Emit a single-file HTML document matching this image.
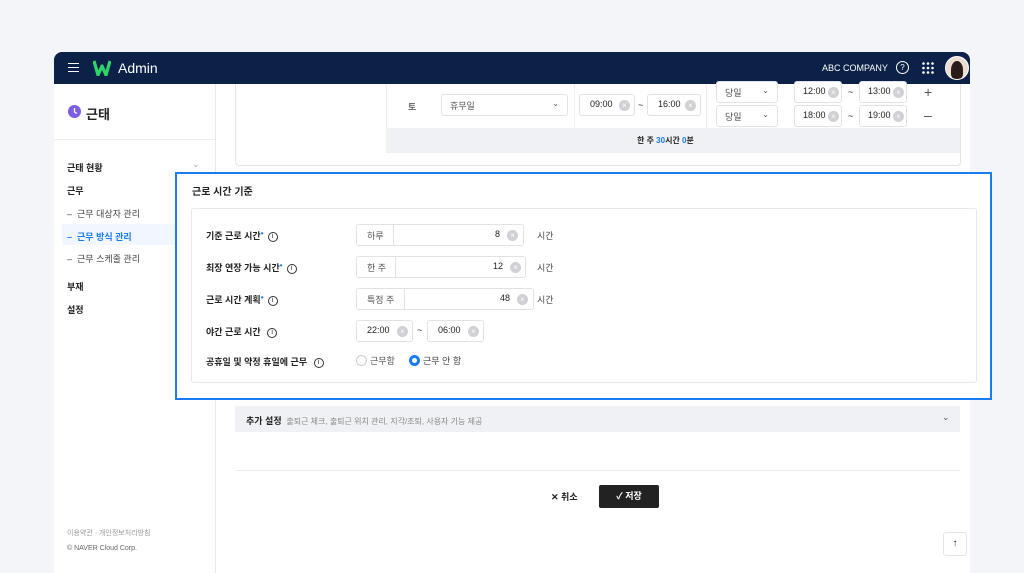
<!DOCTYPE html>
<html><head><meta charset="utf-8"><style>
*{box-sizing:border-box;margin:0;padding:0}
body{width:1024px;height:573px;background:#f4f5f8;font-family:"Liberation Sans","Noto Sans CJK KR",sans-serif;position:relative;overflow:hidden;color:#222}
.abs{position:absolute}
.win{left:54px;top:52px;width:916px;height:521px;background:#fff;border-radius:8px 8px 0 0;overflow:hidden}
.hdr{left:0;top:0;width:916px;height:32px;background:#0b2148}
.side{left:0;top:32px;width:162px;height:489px;border-right:1px solid #e8e8e8;background:#fff}
.t{position:absolute;white-space:nowrap;font-size:9px}
.b{font-weight:bold}
.inp{position:absolute;border:1px solid #e2e2e2;border-radius:3px;background:#fff;height:22px}
.inp .t{top:4px}
.x{position:absolute;width:11px;height:11px;border-radius:50%;background:#cfd1d5;color:#fff;font-size:8px;line-height:11px;text-align:center}
.dd{position:absolute;right:8px;top:4px;font-size:8px;color:#555}
.i{display:inline-block;width:10px;height:10px;border:1px solid #333;border-radius:50%;font-size:7px;line-height:8px;text-align:center;vertical-align:middle;margin-left:4px;font-weight:normal}
.star{color:#1a7cf0;font-size:8px;vertical-align:top}
</style></head><body>
<div class="abs win">
 <div class="abs hdr">
  <div class="abs" style="left:14px;top:11px;width:11px;height:9px;border-top:1.5px solid #fff;border-bottom:1.5px solid #fff"><div style="margin-top:2.5px;border-top:1.5px solid #fff"></div></div>
  <svg class="abs" style="left:39px;top:8px" width="18" height="16" viewBox="0 0 18 16"><path d="M1 1 L5 15 L9 6 L13 15 L17 1" fill="none" stroke="#2fd46a" stroke-width="3.2" stroke-linejoin="round"/></svg>
  <div class="t" style="left:64px;top:8px;font-size:14px;color:#fff">Admin</div>
  <div class="t" style="left:768px;top:11px;font-size:9px;color:#fff">ABC COMPANY</div>
  <div class="abs" style="left:842px;top:9px;width:13px;height:13px;border:1.3px solid #fff;border-radius:50%;color:#fff;font-size:8px;text-align:center;line-height:11px">?</div>
  <svg class="abs" style="left:868px;top:10px" width="12" height="12"><g fill="#fff"><circle cx="1.5" cy="1.5" r="1.3"/><circle cx="6" cy="1.5" r="1.3"/><circle cx="10.5" cy="1.5" r="1.3"/><circle cx="1.5" cy="6" r="1.3"/><circle cx="6" cy="6" r="1.3"/><circle cx="10.5" cy="6" r="1.3"/><circle cx="1.5" cy="10.5" r="1.3"/><circle cx="6" cy="10.5" r="1.3"/><circle cx="10.5" cy="10.5" r="1.3"/></g></svg>
  <div class="abs" style="left:891px;top:4px;width:24px;height:24px;border-radius:50%;background:#e9ddd4;border:1px solid #fff;overflow:hidden"><div style="margin:4px auto 0;width:12px;height:18px;border-radius:50% 50% 30% 30%;background:#2a1c16"></div></div>
 </div>
 <div class="abs side">
  <svg class="abs" style="left:14px;top:21px" width="13" height="13"><circle cx="6.5" cy="6.5" r="6.5" fill="#7b5de8"/><path d="M6.5 3 V7 L9 8.5" stroke="#fff" stroke-width="1.3" fill="none"/></svg>
  <div class="t b" style="left:32px;top:20px;font-size:13px">근태</div>
  <div class="abs" style="left:0;top:55px;width:161px;border-top:1px solid #eee"></div>
  <div class="t b" style="left:13px;top:77px">근태 현황</div>
  <div class="t" style="left:138px;top:75px;color:#aaa">⌄</div>
  <div class="t b" style="left:13px;top:100px">근무</div>
  <div class="t" style="left:13px;top:123px;color:#444">–&nbsp; 근무 대상자 관리</div>
  <div class="abs" style="left:8px;top:140px;width:154px;height:21px;background:#f2f7ff"></div>
  <div class="t b" style="left:13px;top:146px;color:#1a7cf0">–&nbsp; 근무 방식 관리</div>
  <div class="t" style="left:13px;top:168px;color:#444">–&nbsp; 근무 스케줄 관리</div>
  <div class="t b" style="left:13px;top:196px">부재</div>
  <div class="t b" style="left:13px;top:219px">설정</div>
  <div class="t" style="left:13px;top:444px;font-size:7px;color:#999">이용약관 · 개인정보처리방침</div>
  <div class="t" style="left:13px;top:461px;font-size:7px;color:#666">© NAVER Cloud Corp.</div>
 </div>
 <div class="abs" style="left:181px;top:32px;width:726px;height:82px;border:1px solid #e5e5e5;border-top:none;border-radius:0 0 4px 4px"></div>
 <div class="abs" style="left:332px;top:32px;width:574px;height:44px;border-left:1px solid #eee"></div>
 <div class="t" style="left:354px;top:48px">토</div>
 <div class="inp" style="left:387px;top:42px;width:127px"><span class="t" style="left:8px;color:#555">휴무일</span><span class="dd">⌄</span></div>
 <div class="abs" style="left:520px;top:32px;height:44px;border-left:1px solid #eee"></div>
 <div class="inp" style="left:525px;top:42px;width:56px"><span class="t" style="left:10px">09:00</span><span class="x" style="left:39px;top:5px">×</span></div>
 <div class="t" style="left:584px;top:48px">~</div>
 <div class="inp" style="left:593px;top:42px;width:54px"><span class="t" style="left:10px">16:00</span><span class="x" style="left:37px;top:5px">×</span></div>
 <div class="abs" style="left:652px;top:32px;height:44px;border-left:1px solid #eee"></div>
 <div class="inp" style="left:662px;top:29px;width:62px"><span class="t" style="left:8px;color:#555">당일</span><span class="dd">⌄</span></div>
 <div class="inp" style="left:662px;top:53px;width:62px"><span class="t" style="left:8px;color:#555">당일</span><span class="dd">⌄</span></div>
 <div class="inp" style="left:740px;top:29px;width:48px"><span class="t" style="left:8px">12:00</span><span class="x" style="left:33px;top:5px">×</span></div>
 <div class="inp" style="left:740px;top:53px;width:48px"><span class="t" style="left:8px">18:00</span><span class="x" style="left:33px;top:5px">×</span></div>
 <div class="t" style="left:794px;top:35px">~</div><div class="t" style="left:794px;top:59px">~</div>
 <div class="inp" style="left:805px;top:29px;width:48px"><span class="t" style="left:8px">13:00</span><span class="x" style="left:33px;top:5px">×</span></div>
 <div class="inp" style="left:805px;top:53px;width:48px"><span class="t" style="left:8px">19:00</span><span class="x" style="left:33px;top:5px">×</span></div>
 <div class="t" style="left:870px;top:32px;font-size:14px;color:#555">+</div>
 <div class="t" style="left:870px;top:55px;font-size:14px;color:#555">–</div>
 <div class="abs" style="left:332px;top:76px;width:574px;height:25px;background:#f0f1f5"></div>
 <div class="t b" style="left:583px;top:83px;font-size:8px">한 주 <span style="color:#1a7cf0">30</span>시간 <span style="color:#1a7cf0">0</span>분</div>
 <div class="abs" style="left:181px;top:354px;width:725px;height:26px;background:#f0f1f5;border-radius:2px"></div>
 <div class="t b" style="left:192px;top:362px">추가 설정 <span style="font-weight:normal;color:#888;font-size:8px">&nbsp;출퇴근 체크, 출퇴근 위치 관리, 지각/조퇴, 사용자 기능 제공</span></div>
 <div class="t" style="left:888px;top:360px;color:#555">⌄</div>
 <div class="abs" style="left:181px;top:418px;width:725px;border-top:1px solid #eee"></div>
 <div class="t b" style="left:497px;top:438px">✕ 취소</div>
 <div class="abs" style="left:545px;top:433px;width:60px;height:23px;background:#222;border-radius:2px;color:#fff;font-size:9px;font-weight:bold;text-align:center;line-height:23px">✓ 저장</div>
 <div class="abs" style="left:889px;top:480px;width:24px;height:24px;border:1px solid #e5e5e5;border-radius:3px;background:#fff;text-align:center;font-size:10px;line-height:22px">↑</div>
</div>
<div class="abs" style="left:175px;top:172px;width:817px;height:228px;border:2px solid #1a7cf0;background:#fff">
 <div class="t b" style="left:15px;top:9px;font-size:10px">근로 시간 기준</div>
 <div class="abs" style="left:14px;top:34px;width:786px;height:175px;border:1px solid #e8e8e8;border-radius:3px"></div>
 <div class="t b" style="left:29px;top:55px">기준 근로 시간<span class="star">•</span><span class="i">i</span></div>
 <div class="t b" style="left:29px;top:87px">최장 연장 가능 시간<span class="star">•</span><span class="i">i</span></div>
 <div class="t b" style="left:29px;top:119px">근로 시간 계획<span class="star">•</span><span class="i">i</span></div>
 <div class="t b" style="left:29px;top:151px">야간 근로 시간 <span class="i">i</span></div>
 <div class="t b" style="left:29px;top:181px">공휴일 및 약정 휴일에 근무 <span class="i">i</span></div>
 <div class="inp" style="left:179px;top:50px;width:168px"><span class="t" style="left:10px;color:#555">하루</span><span class="abs" style="left:36px;top:0;height:20px;border-left:1px solid #e2e2e2"></span><span class="t" style="left:138px">8</span><span class="x" style="left:150px;top:5px">×</span></div>
 <div class="t" style="left:360px;top:55px;color:#444">시간</div>
 <div class="inp" style="left:179px;top:82px;width:170px"><span class="t" style="left:10px;color:#555">한 주</span><span class="abs" style="left:38px;top:0;height:20px;border-left:1px solid #e2e2e2"></span><span class="t" style="left:136px">12</span><span class="x" style="left:153px;top:5px">×</span></div>
 <div class="t" style="left:360px;top:87px;color:#444">시간</div>
 <div class="inp" style="left:179px;top:114px;width:178px"><span class="t" style="left:10px;color:#555">특정 주</span><span class="abs" style="left:47px;top:0;height:20px;border-left:1px solid #e2e2e2"></span><span class="t" style="left:143px">48</span><span class="x" style="left:160px;top:5px">×</span></div>
 <div class="t" style="left:360px;top:119px;color:#444">시간</div>
 <div class="inp" style="left:179px;top:146px;width:57px"><span class="t" style="left:10px">22:00</span><span class="x" style="left:40px;top:5px">×</span></div>
 <div class="t" style="left:240px;top:151px">~</div>
 <div class="inp" style="left:250px;top:146px;width:57px"><span class="t" style="left:10px">06:00</span><span class="x" style="left:40px;top:5px">×</span></div>
 <div class="abs" style="left:179px;top:181px;width:11px;height:11px;border:1px solid #ccc;border-radius:50%"></div>
 <div class="t" style="left:193px;top:180px;color:#555">근무함</div>
 <div class="abs" style="left:232px;top:181px;width:11px;height:11px;border:3px solid #1a7cf0;border-radius:50%;background:#fff"></div>
 <div class="t" style="left:246px;top:180px;color:#444">근무 안 함</div>
</div>
</body></html>
